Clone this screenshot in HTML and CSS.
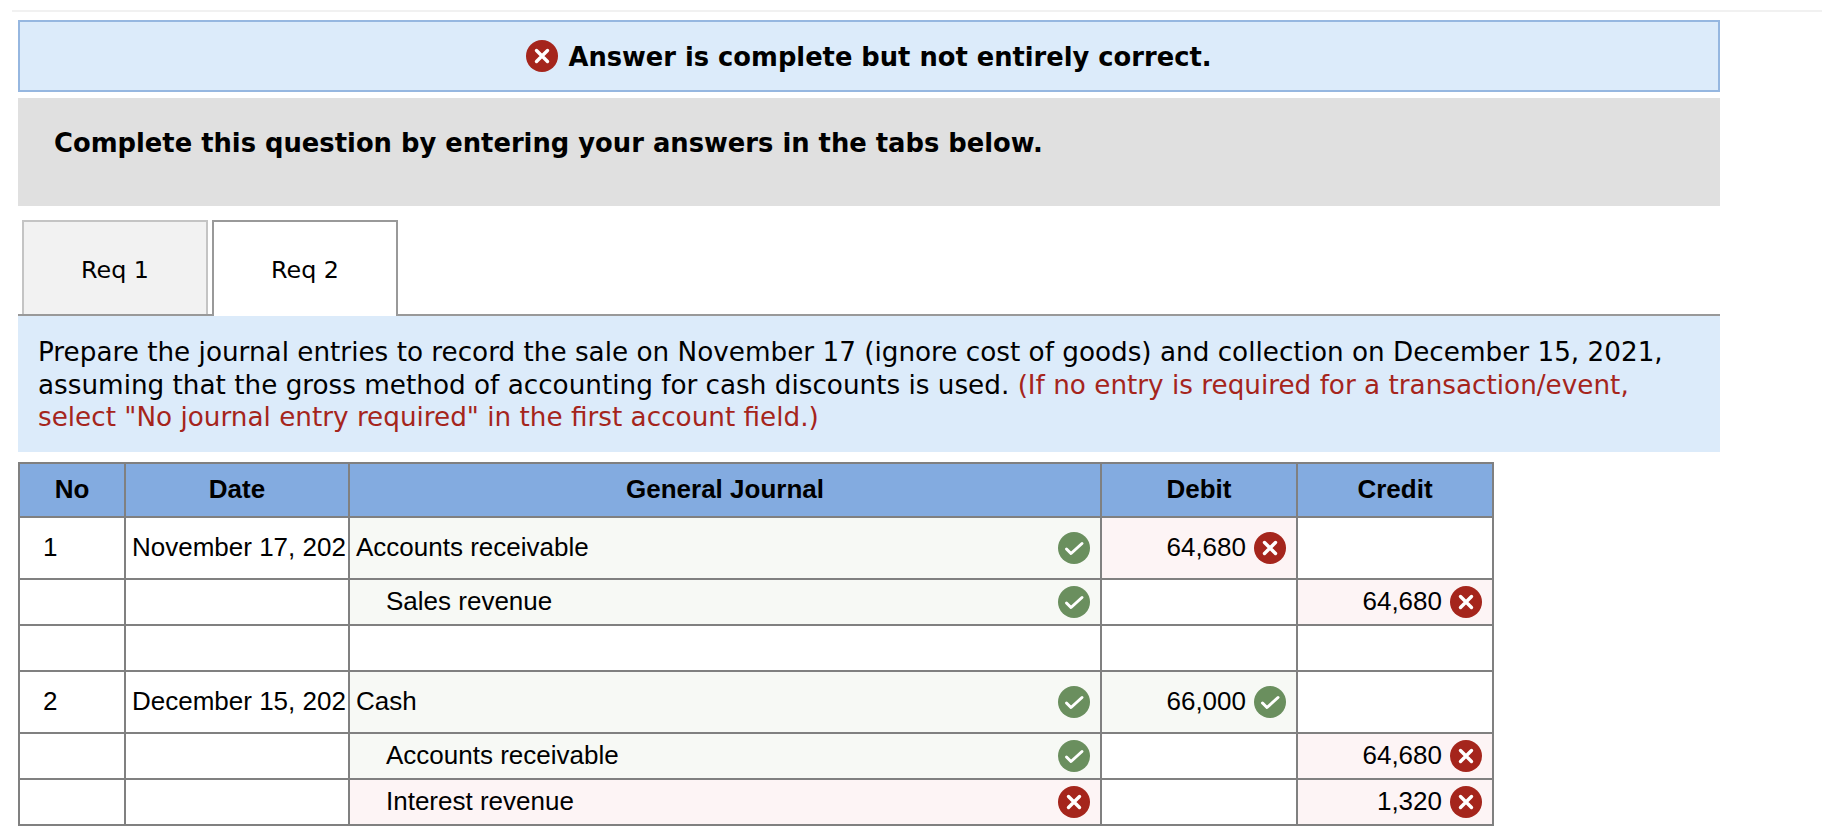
FILE: index.html
```html
<!DOCTYPE html>
<html lang="en">
<head>
<meta charset="utf-8">
<title>Journal entries</title>
<link rel="stylesheet" href="styles.css">
</head>
<body>
<svg class="defs" width="0" height="0" aria-hidden="true">
  <symbol id="bad" viewBox="0 0 32 32"><circle cx="16" cy="16" r="16" fill="#a5251c"/><path d="M10.5 10.5 21.5 21.5M21.5 10.5 10.5 21.5" stroke="#fff" stroke-width="3.4" stroke-linecap="round" fill="none"/></symbol>
  <symbol id="good" viewBox="0 0 32 32"><circle cx="16" cy="16" r="16" fill="#6a8f5e"/><path d="M8.5 17 13 21.5 24 11.5" stroke="#fff" stroke-width="3" stroke-linecap="round" stroke-linejoin="round" fill="none"/></symbol>
</svg>
<div class="rule"></div>
<main class="main">
  <div class="alert"><svg class="icon"><use href="#bad"/></svg><strong>Answer is complete but not entirely correct.</strong></div>
  <div class="prompt"><strong>Complete this question by entering your answers in the tabs below.</strong></div>
  <div class="tabs">
    <div class="tab tab-off">Req 1</div>
    <div class="tab tab-on">Req 2</div>
  </div>
  <div class="desc">Prepare the journal entries to record the sale on November 17 (ignore cost of goods) and collection on December 15, 2021,<br>assuming that the gross method of accounting for cash discounts is used. <span class="red">(If no entry is required for a transaction/event,<br>select "No journal entry required" in the first account field.)</span></div>
  <table class="journal">
    <colgroup><col class="c-no"><col class="c-date"><col class="c-acc"><col class="c-amt"><col class="c-amt2"></colgroup>
    <thead>
      <tr class="r-head"><th>No</th><th>Date</th><th>General Journal</th><th>Debit</th><th>Credit</th></tr>
    </thead>
    <tbody>
      <tr class="r-tall">
        <td class="no">1</td><td class="date">November 17, 202</td>
        <td class="ok"><div class="acc"><span>Accounts receivable</span><svg class="icon"><use href="#good"/></svg></div></td>
        <td class="wrong"><div class="amt"><span>64,680</span><svg class="icon"><use href="#bad"/></svg></div></td><td></td>
      </tr>
      <tr class="r-b">
        <td></td><td></td>
        <td class="ok"><div class="acc sub"><span>Sales revenue</span><svg class="icon"><use href="#good"/></svg></div></td>
        <td></td><td class="wrong"><div class="amt"><span>64,680</span><svg class="icon"><use href="#bad"/></svg></div></td>
      </tr>
      <tr class="r-c"><td></td><td></td><td></td><td></td><td></td></tr>
      <tr class="r-d">
        <td class="no">2</td><td class="date">December 15, 202</td>
        <td class="ok"><div class="acc"><span>Cash</span><svg class="icon"><use href="#good"/></svg></div></td>
        <td class="ok"><div class="amt"><span>66,000</span><svg class="icon"><use href="#good"/></svg></div></td><td></td>
      </tr>
      <tr class="r-b">
        <td></td><td></td>
        <td class="ok"><div class="acc sub"><span>Accounts receivable</span><svg class="icon"><use href="#good"/></svg></div></td>
        <td></td><td class="wrong"><div class="amt"><span>64,680</span><svg class="icon"><use href="#bad"/></svg></div></td>
      </tr>
      <tr class="r-b">
        <td></td><td></td>
        <td class="wrong"><div class="acc sub"><span>Interest revenue</span><svg class="icon"><use href="#bad"/></svg></div></td>
        <td></td><td class="wrong"><div class="amt"><span>1,320</span><svg class="icon"><use href="#bad"/></svg></div></td>
      </tr>
    </tbody>
  </table>
</main>
</body>
</html>
```

FILE: styles.css
```css
* { box-sizing: border-box; }
html, body { margin: 0; padding: 0; background: #fff; }
body { font-family: "DejaVu Sans", Verdana, sans-serif; color: #000; overflow: hidden; height: 838px; }
.defs { display: block; height: 0; }
.rule { height: 2px; margin: 10px 0 8px 12px; background: #f1f1f1; }
.main { width: 1702px; margin-left: 18px; }
.icon { width: 32px; height: 32px; flex: none; display: block; }

.alert {
  height: 72px; display: flex; align-items: center; justify-content: center; gap: 10px;
  background: #dcebfa; border: 2px solid #96b7e0; font-size: 25.76px; line-height: 32px; padding-top: 1px;
}
.alert .icon { margin-top: -1px; }
.prompt {
  height: 108px; margin-top: 6px; padding: 30px 0 0 36px;
  background: #e0e0e0; font-size: 25.8px; line-height: 30px;
}
.tabs { display: flex; align-items: flex-end; gap: 4px; height: 96px; margin-top: 14px; padding-left: 4px; border-bottom: 2px solid #999; }
.tab { width: 186px; display: flex; align-items: center; justify-content: center; font-size: 23.8px; }
.tab-off { height: 94px; padding-top: 4px; background: #f2f2f2; border: 2px solid #c4c4c4; border-bottom: 0; }
.tab-on { height: 96px; margin-bottom: -2px; padding-top: 2px; background: #fff; border: 2px solid #999; border-bottom: 0; }

.desc { height: 136px; padding: 20px 20px 0; background: #dcebfa; font-size: 26.25px; line-height: 32.5px; white-space: nowrap; }
.red { color: #a5251c; }

.journal {
  width: 1476px; margin-top: 10px; table-layout: fixed; border-collapse: collapse;
  font-family: "Liberation Sans", Arial, sans-serif; font-size: 26px;
}
.c-no { width: 106px; }
.c-date { width: 224px; }
.c-acc { width: 752px; }
.c-amt { width: 196px; }
.c-amt2 { width: 196px; }
.journal th, .journal td { border: 2px solid #808080; padding: 0; overflow: hidden; white-space: nowrap; }
.journal th { background: #83abe0; font-weight: 700; text-align: center; padding-bottom: 2px; }
.r-head { height: 54px; }
.r-tall { height: 62px; }
.r-b { height: 46px; }
.r-c { height: 46px; }
.r-d { height: 62px; }
.journal td.no { padding: 0 0 2px 23px; }
.journal td.date { padding: 0 0 2px 6px; }
.ok { background: #f7f9f5; }
.wrong { background: #fdf4f5; }
.acc { display: flex; align-items: center; justify-content: space-between; padding: 0 10px 0 6px; }
.sub { padding-left: 36px; }
.amt { display: flex; align-items: center; justify-content: flex-end; gap: 8px; padding-right: 10px; }
.acc span, .amt span { padding-bottom: 2px; }
```
